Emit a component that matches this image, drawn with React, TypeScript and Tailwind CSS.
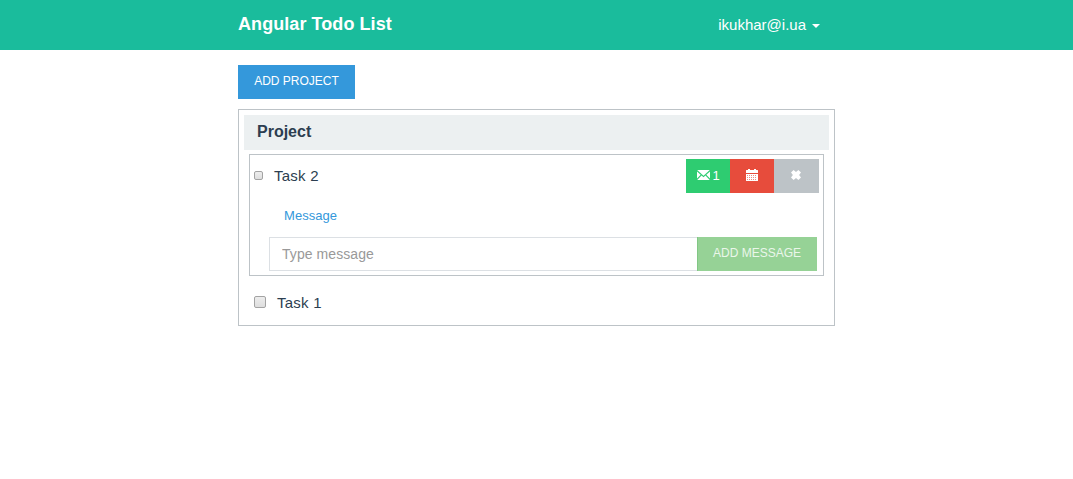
import { useState } from "react";

function EnvelopeIcon() {
  return (
    <svg className="mb-[2px] h-[10px] w-[13px]" viewBox="0 0 13 10" fill="currentColor">
      <path d="M.2 0h12.6L6.5 5.8z" />
      <path d="M0 1.4 3.7 4.8 0 8.4zM13 1.4 9.3 4.8 13 8.4z" />
      <path d="M4.5 5.6 6.5 7.3 8.5 5.6 12.8 10H.2z" />
    </svg>
  );
}

function CalendarIcon() {
  return (
    <svg className="h-3 w-3" viewBox="0 0 12 12" fill="currentColor">
      <path d="M2 0h2v1h4V0h2v1h1.5q.5 0 .5.5V4H0V1.5Q0 1 .5 1H2z" />
      <path d="M0 5h12v6.4q0 .6-.6.6H.6Q0 12 0 11.4z" />
      <path
        className="text-[#f08a80]"
        d="M1 6v1h1V6zM3 6v1h1V6zM5 6v1h1V6zM7 6v1h1V6zM9 6v1h1V6zM1 8v1h1V8zM3 8v1h1V8zM5 8v1h1V8zM7 8v1h1V8zM9 8v1h1V8zM1 10v1h1v-1zM3 10v1h1v-1zM5 10v1h1v-1zM7 10v1h1v-1zM9 10v1h1v-1z"
      />
    </svg>
  );
}

function RemoveIcon() {
  return (
    <svg className="mr-px h-[10px] w-[10px]" viewBox="0 0 10 10" fill="currentColor">
      <path d="M2.6 0 5 1.9 7.4 0 10 2.6 8.1 5 10 7.4 7.4 10 5 8.1 2.6 10 0 7.4 1.9 5 0 2.6z" />
    </svg>
  );
}

const checkboxStyle =
  "shrink-0 appearance-none border border-[#a3a3a3] bg-linear-to-b from-[#ededed] to-[#dedede] checked:from-[#8fb8e0] checked:to-[#5d97cf]";

export default function App() {
  const [message, setMessage] = useState("");

  return (
    <div className="min-h-[479px] bg-white font-['Liberation_Sans',Arial,sans-serif] text-[15px] text-[#2c3e50]">
      <header className="h-[50px] bg-[#1abc9c] text-white">
        <div className="mx-auto flex h-full w-[597px] items-center justify-between pr-[15px]">
          <a className="pb-[3px] text-[18px] leading-5 font-bold tracking-[0.07px]">Angular Todo List</a>
          <button className="flex items-center text-[15px] leading-5">
            ikukhar@i.ua
            <svg className="mt-px ml-[6px] h-1 w-2" viewBox="0 0 8 4" fill="currentColor">
              <path d="M0 0h8L4 4z" />
            </svg>
          </button>
        </div>
      </header>

      <main className="mx-auto w-[597px] pt-[15px]">
        <button className="flex h-[34px] w-[117px] justify-center bg-[#3498db] pt-[7px] text-xs leading-[18px] text-white">
          ADD PROJECT
        </button>

        <section className="mt-[10px] h-[217px] border border-[#bdc3c7] p-[5px]">
          <h2 className="h-[35px] bg-[#ecf0f1] pt-[5px] pl-[13px] text-[16px] leading-[23px] font-bold">Project</h2>

          <article className="mx-[5px] mt-1 h-[122px] border border-[#bdc3c7]">
            <div className="flex h-[42px] items-center pr-1 pl-1">
              <input type="checkbox" className={`${checkboxStyle} mb-[2px] h-[9px] w-[9px] rounded-[2px]`} />
              <span className="ml-[11px] leading-5 tracking-[0.25px]">Task 2</span>
              <div className="ml-auto flex h-[34px] text-[13px] text-white">
                <button className="flex w-11 items-center justify-center gap-[2px] bg-[#2ecc71] pl-px">
                  <EnvelopeIcon />
                  <span>1</span>
                </button>
                <button className="flex w-11 items-center justify-center bg-[#e74c3c] pb-[2px]">
                  <CalendarIcon />
                </button>
                <button className="flex w-[45px] items-center justify-center bg-[#bdc3c7] pb-[2px]">
                  <RemoveIcon />
                </button>
              </div>
            </div>
            <p className="mt-[9px] ml-[34px] text-[13px] leading-5 tracking-[0.05px] text-[#3498db]">Message</p>
            <form className="mt-[11px] mr-[6px] ml-[19px] flex h-[34px]" onSubmit={(e) => e.preventDefault()}>
              <input
                value={message}
                onChange={(e) => setMessage(e.target.value)}
                placeholder="Type message"
                className="min-w-0 flex-1 border border-r-0 border-[#dce0e4] px-3 text-[14px] tracking-[0.07px] outline-none placeholder:text-[#999]"
              />
              <button className="flex w-[120px] justify-center border-l border-[#82c785] bg-[#96d296] pt-[7px] pr-px text-xs leading-[18px] text-[#eaf6ea]">
                ADD MESSAGE
              </button>
            </form>
          </article>

          <div className="mt-4 flex h-5 items-center pl-[10px]">
            <input type="checkbox" className={`${checkboxStyle} h-3 w-3 rounded-[2px]`} />
            <span className="mt-[2px] ml-[11px] leading-5 tracking-[0.25px]">Task 1</span>
          </div>
        </section>
      </main>
    </div>
  );
}
